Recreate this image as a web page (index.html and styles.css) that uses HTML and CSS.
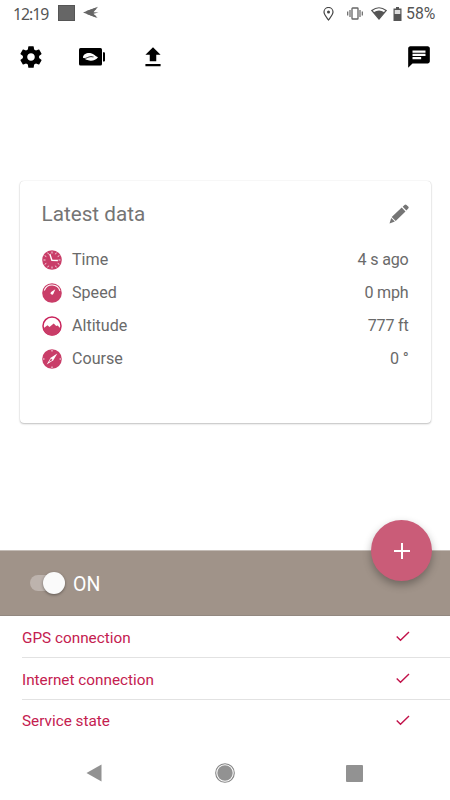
FILE: index.html
```html
<!DOCTYPE html>
<html lang="en">
<head>
<meta charset="utf-8">
<title>Latest data</title>
<link rel="stylesheet" href="styles.css">
</head>
<body>
<div class="screen">
  <header class="status">
    <span class="clock">12:19</span>
    <span class="status-square"></span>
    <svg class="status-plane" width="16" height="14" viewBox="0 0 16 14"><path d="M0 6.500 15 .8 10.500 6.300 15.500 6.600 10.500 7.700 14.700 12z" fill="#666"/><path d="M3.500 5.700 13 2.500M4 7.300l9 3.500" stroke="#666" stroke-width="1.500"/></svg>
    <div class="status-right">
      <svg class="pin" width="11" height="14" viewBox="0 0 11 14" fill="none" stroke="#444"><path d="M5.500 13C3 9.600 1 7.500 1 5a4.500 4.500 0 0 1 9 0c0 2.500-2 4.600-4.500 8z" stroke-width="1.200"/><circle cx="5.500" cy="5" r="1.500" fill="#444" stroke="none"/></svg>
      <svg class="vibrate" width="16" height="13" viewBox="0 0 16 13" fill="none" stroke="#666"><rect x="5" y="1" width="6" height="11" rx=".6" stroke-width="1.300"/><path d="M3 3v7M.7 4.500v4M13 3v7M15.300 4.500v4" stroke-width="1.200"/></svg>
      <svg class="wifi" width="16" height="13" viewBox="0 0 16 13"><path d="M.8 3.500Q8-2 15.200 3.500L8 12z" fill="#fff" stroke="#555" stroke-width="1.200"/><path d="M2.600 5.200Q8 1.800 13.400 5.200L8 12z" fill="#555"/></svg>
      <svg class="battery" width="9" height="14" viewBox="0 0 9 14"><path d="M3 0h3v1.500h2.500V14H.5V1.500H3z" fill="#555"/><path d="M1.700 3h5.600v4H1.700z" fill="#ddd"/></svg>
      <span class="percent">58%</span>
    </div>
  </header>

  <nav class="toolbar">
    <svg class="gear" width="26" height="26" viewBox="0 0 24 24"><path d="M19.430 12.980c.04-.32.07-.64.07-.98s-.03-.66-.07-.98l2.110-1.650c.19-.15.24-.42.12-.64l-2-3.460c-.12-.22-.39-.3-.61-.22l-2.490 1c-.52-.4-1.080-.73-1.690-.98l-.38-2.650C14.460 2.180 14.250 2 14 2h-4c-.25 0-.46.180-.49.420l-.38 2.650c-.61.250-1.170.590-1.690.980l-2.490-1c-.23-.09-.49 0-.61.220l-2 3.460c-.13.220-.07.490.12.640l2.110 1.650c-.04.320-.07.650-.07.980s.03.660.07.980l-2.110 1.650c-.19.150-.24.420-.12.640l2 3.460c.12.220.39.300.61.220l2.490-1c.52.400 1.080.730 1.690.980l.38 2.650c.03.240.24.420.49.420h4c.25 0 .46-.18.490-.42l.38-2.650c.61-.25 1.170-.59 1.690-.98l2.490 1c.23.090.49 0 .61-.22l2-3.460c.12-.22.070-.49-.12-.64l-2.110-1.650zM12 15.500c-1.930 0-3.500-1.570-3.500-3.500s1.570-3.500 3.500-3.500 3.500 1.570 3.500 3.500-1.570 3.500-3.500 3.500z"/></svg>
    <svg class="eco" width="27" height="18" viewBox="0 0 27 18"><rect x="0" y="0" width="23" height="17.500" rx="1.500"/><path d="M24 4.200h1a1 1 0 0 1 1 1v7.200a1 1 0 0 1-1 1h-1z"/><path d="M4 9.700C4 6 8 4.500 12 5.200c3 .6 4 3 7 4-2 3-6.500 4.500-10.500 2.900C7 11.700 6 11 4 9.700z" fill="#fff"/><path d="M4 10.600c3.500.3 5-2 8-2 1 0 1.600.4 2.500.3" fill="none" stroke="#000" stroke-width=".8"/></svg>
    <svg class="upload" width="26" height="26" viewBox="0 0 24 24"><path d="M9 16h6v-6h4l-7-7-7 7h4zm-4 2.500h14v2H5z"/></svg>
    <svg class="chat" width="26" height="26" viewBox="0 0 24 24"><path d="M20 2H4c-1.100 0-1.990.9-1.990 2L2 22l4-4h14c1.100 0 2-.9 2-2V4c0-1.100-.9-2-2-2zM6 9h12v2H6V9zm8 5H6v-2h8v2zm4-6H6V6h12v2z"/></svg>
  </nav>

  <main class="card">
    <div class="card-head">
      <h1>Latest data</h1>
      <svg width="20" height="20" viewBox="0 0 20 20" fill="#757575"><path d="M12.700 3.600 16.500 7.400 6.700 17 2.700 13zM13.700 2.700l1.800-1.800q1-1 2 0L19.200 2.500q1 1 0 2L17.400 6.400zM2.200 13.900l3.700 3.700L.5 19.500z"/></svg>
    </div>
    <div class="datum">
      <svg width="20" height="20" viewBox="0 0 20 20"><circle cx="10" cy="10" r="9.800" fill="#c93d68"/><path d="M10 1.500v2M10 16.500v2M1.500 10h2M16.500 10h2M5.700 2.700l.9 1.600M13.400 15.700l.9 1.600M2.700 5.700l1.600.9M15.700 13.400l1.600.9M2.700 14.300l1.600-.9M15.700 6.600l1.600-.9M5.700 17.300l.9-1.600M13.400 4.300l.9-1.600" stroke="#fff" stroke-width=".8"/><path d="M7.800 4l2.100 6.300 6 .2" fill="none" stroke="#fff" stroke-width="1.400"/></svg>
      <span>Time</span><span class="value">4 s ago</span>
    </div>
    <div class="datum">
      <svg width="20" height="20" viewBox="0 0 20 20"><circle cx="10" cy="10" r="9.800" fill="#c93d68"/><path d="M2.300 7.500a8.200 8.200 0 0 1 15.600.3" fill="none" stroke="#fff" stroke-width="1.100"/><path d="M13.300 6.200l-1.900 4.600a1.500 1.500 0 1 1-2.300-1.800z" fill="#fff"/></svg>
      <span>Speed</span><span class="value">0 mph</span>
    </div>
    <div class="datum">
      <svg width="20" height="20" viewBox="0 0 20 20"><circle cx="10" cy="10" r="9" fill="#fff" stroke="#c9245c" stroke-width="1.500"/><path d="M1.200 12.500 5.500 9.200l2 1.700 4.200-3.500 2.500 2.700 1.500-.7 3 3.300a9 9 0 0 1-17.500-.2z" fill="#c93d68"/></svg>
      <span>Altitude</span><span class="value">777 ft</span>
    </div>
    <div class="datum">
      <svg width="20" height="20" viewBox="0 0 20 20"><circle cx="10" cy="10" r="9.800" fill="#c93d68"/><path d="M15.300 4.500 11.300 11.200 4.700 15.500 8.700 8.800z" fill="#fff"/><path d="M9 9.500l1.600 1.600-3.500 2z" fill="#c93d68"/><path d="M10 1v1.500M10 17.500V19M1 10h1.500M17.500 10H19" stroke="#fff" stroke-width=".9"/></svg>
      <span>Course</span><span class="value">0 °</span>
    </div>
  </main>

  <section class="band">
    <span class="switch"><span class="knob"></span></span>
    <span class="on">ON</span>
    <button class="fab" aria-label="Add"><svg width="16" height="16" viewBox="0 0 16 16"><path d="M8 0v16M0 8h16" stroke="#fff" stroke-width="2"/></svg></button>
  </section>

  <section class="states">
    <div class="state"><span>GPS connection</span><svg width="14" height="11" viewBox="0 0 14 11"><path d="M.7 5.500 4.500 9.300 13 .9"/></svg></div>
    <div class="state"><span>Internet connection</span><svg width="14" height="11" viewBox="0 0 14 11"><path d="M.7 5.500 4.500 9.300 13 .9"/></svg></div>
    <div class="state"><span>Service state</span><svg width="14" height="11" viewBox="0 0 14 11"><path d="M.7 5.500 4.500 9.300 13 .9"/></svg></div>
  </section>

  <footer class="navbar">
    <svg width="16" height="18" viewBox="0 0 16 18"><path d="M.5 9 15.500.5v17z" fill="#929292"/></svg>
    <svg width="20" height="20" viewBox="0 0 20 20"><circle cx="10" cy="10" r="9.300" fill="#fff" stroke="#858585" stroke-width="1.100"/><circle cx="10" cy="10" r="7.700" fill="#929292"/></svg>
    <span class="recent"></span>
  </footer>
</div>
</body>
</html>
```

FILE: styles.css
```css
* { box-sizing: border-box; }
body { margin: 0; background: #fff; font-family: Roboto, "Liberation Sans", sans-serif; }
svg { display: block; flex: none; }
.screen { width: 450px; height: 800px; display: flex; flex-direction: column; overflow: hidden; }

.status { height: 27px; display: flex; align-items: center; padding: 0 13px 0 13px; color: #555; font-size: 15.8px; }
.clock { width: 45px; letter-spacing: -1px; font-family: "Noto Sans", Roboto, sans-serif; }
.status-square { width: 17px; height: 16px; margin-top: -1px; background: #666; border: 1px solid #555; }
.status-plane { margin-left: 8px; margin-top: -1px; }
.status-right { margin-left: auto; display: flex; align-items: center; }
.vibrate { margin-left: 13px; }
.wifi { margin-left: 8px; }
.battery { margin-left: 6px; }
.percent { width: 31px; margin-left: 4px; }

.toolbar { height: 60px; display: flex; align-items: center; padding: 0 18px 0 17.5px; }
.eco { margin-left: 35.5px; }
.upload { margin-left: 34px; }
.chat { margin-left: auto; }

.card { height: 242px; margin: 94px 19.5px 0; padding: 0 22px; border-radius: 4px; background: #fff; box-shadow: 0 1px 2px rgba(0, 0, 0, .24), 0 0 1px rgba(0, 0, 0, .2); }
.card-head { height: 62px; padding-top: 3px; display: flex; align-items: center; justify-content: space-between; }
h1 { margin: 0; font-size: 20.7px; font-weight: 400; color: #757575; }
.datum { height: 33px; display: flex; align-items: center; gap: 10.5px; color: #6a6a6a; font-size: 16.1px; }
.value { margin-left: auto; letter-spacing: -.2px; }

.band { position: relative; height: 66px; margin-top: 127px; flex: none; display: flex; align-items: center; padding-left: 30px; background: #a09389; border-top: 1px solid #c4bcb6; border-bottom: 1px solid #928880; }
.switch { width: 34.5px; height: 16px; border-radius: 8px; background: #bdb3ad; display: flex; align-items: center; justify-content: flex-end; }
.knob { flex: none; width: 22px; height: 22px; border-radius: 50%; background: #fafafa; box-shadow: 0 1px 3px rgba(0, 0, 0, .4); }
.on { margin-left: 8.5px; padding-top: 2px; color: #fff; font-size: 19.5px; }
.fab { position: absolute; right: 18px; top: -31px; width: 61px; height: 61px; padding: 0; border: 0; border-radius: 50%; background: #ca5c78; display: flex; align-items: center; justify-content: center; box-shadow: 0 4px 8px rgba(0, 0, 0, .3); }

.states { padding-left: 22px; }
.state { height: 42px; display: flex; align-items: center; justify-content: space-between; padding-right: 40px; color: #c4204f; font-size: 15.3px; border-bottom: 1px solid #e2e2e2; }
.state span { padding-top: 2px; }
.state:last-child { height: 41px; border-bottom: 0; }
.state:last-child span { padding-top: 0; }
.state path { fill: none; stroke: #c2124a; stroke-width: 1.4; }

.navbar { display: flex; align-items: center; justify-content: space-between; height: 59px; padding: 5px 87px 0 86px; }
.navbar svg + svg { margin-left: 2px; }
.recent { width: 17px; height: 17px; border-radius: 1px; background: #929292; }
```
